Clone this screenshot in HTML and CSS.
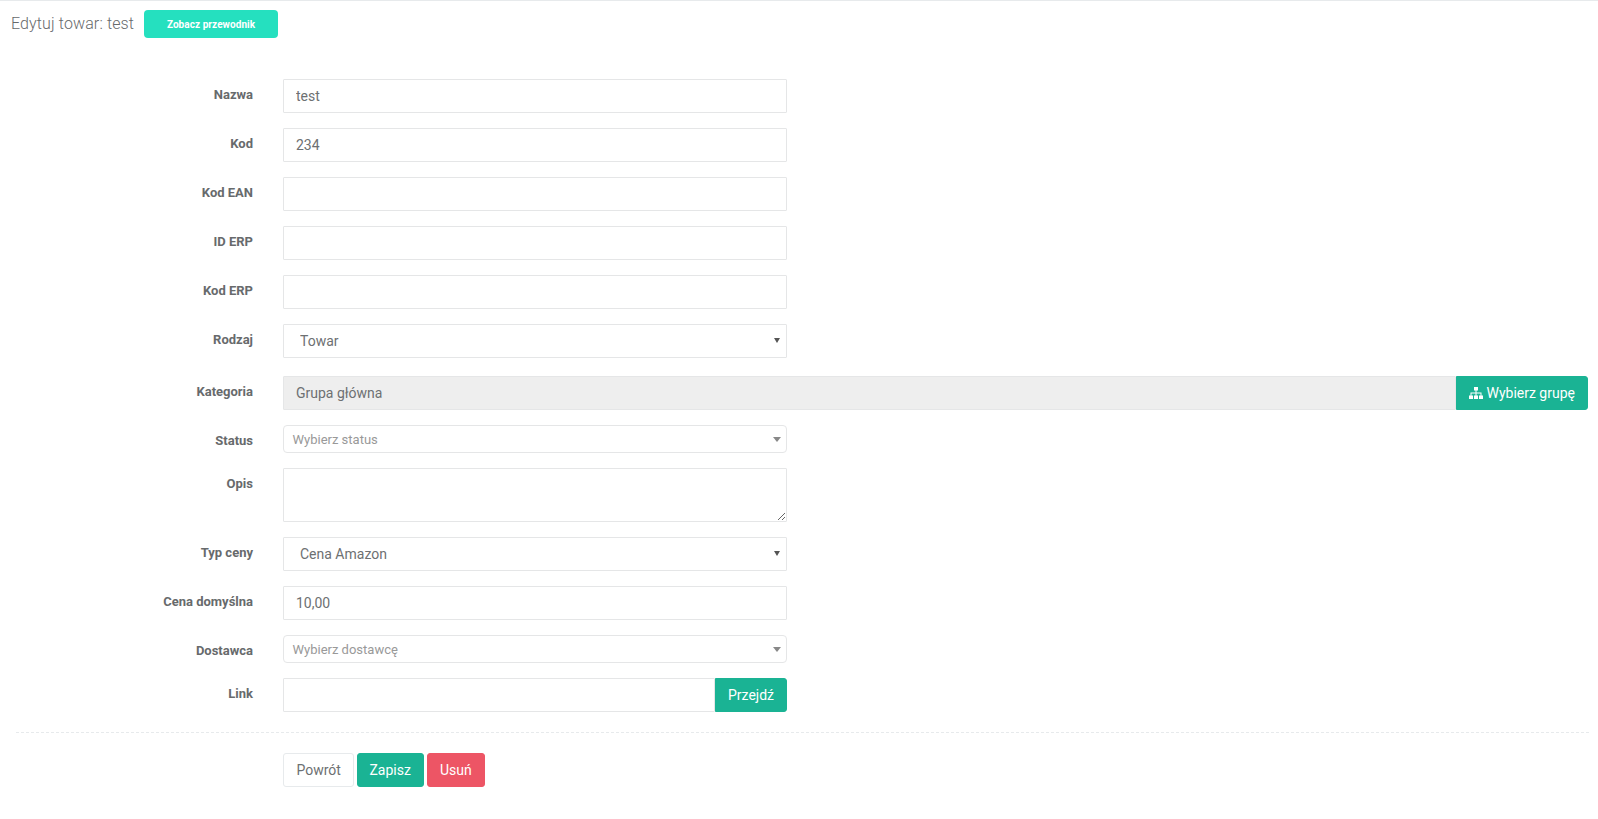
FILE: index.html
```html
<!DOCTYPE html>
<html lang="pl">
<head>
<meta charset="utf-8">
<title>Edytuj towar</title>
<link rel="stylesheet" href="styles.css">
</head>
<body>
<header class="page-head">
  <h1 class="title">Edytuj towar: test</h1>
  <a class="guide-btn">Zobacz przewodnik</a>
</header>
<form class="form">
  <div class="row"><label class="lbl">Nazwa</label><div class="field"><input class="ctl" value="test"></div></div>
  <div class="row"><label class="lbl">Kod</label><div class="field"><input class="ctl" value="234"></div></div>
  <div class="row"><label class="lbl">Kod EAN</label><div class="field"><input class="ctl"></div></div>
  <div class="row"><label class="lbl">ID ERP</label><div class="field"><input class="ctl"></div></div>
  <div class="row"><label class="lbl">Kod ERP</label><div class="field"><input class="ctl"></div></div>
  <div class="row row-tall"><label class="lbl">Rodzaj</label><div class="field select-wrap"><select class="ctl sel"><option>Towar</option></select></div></div>
  <div class="row"><label class="lbl">Kategoria</label>
    <div class="group-wide">
      <input class="ctl ctl-disabled" value="Grupa główna" disabled>
      <button type="button" class="btn btn-green btn-append btn-group-pick">
        <svg class="ico" viewBox="0 0 14 12" aria-hidden="true"><path fill="currentColor" d="M5 0h4v3.500H7.500V5.500h5V8.500H14V12H10V8.500h1.500V6.500h-4V8.500H9V12H5V8.500h1.500V6.500h-4V8.500H4V12H0V8.500h1.500V5.500h5V3.500H5z"/></svg>
        Wybierz grupę
      </button>
    </div>
  </div>
  <div class="row"><label class="lbl">Status</label><div class="field"><div class="chosen">Wybierz status<span class="caret"></span></div></div></div>
  <div class="row"><label class="lbl">Opis</label><div class="field"><textarea class="ctl area"></textarea></div></div>
  <div class="row"><label class="lbl">Typ ceny</label><div class="field select-wrap"><select class="ctl sel"><option>Cena Amazon</option></select></div></div>
  <div class="row"><label class="lbl">Cena domyślna</label><div class="field"><input class="ctl" value="10,00"></div></div>
  <div class="row"><label class="lbl">Dostawca</label><div class="field"><div class="chosen">Wybierz dostawcę<span class="caret"></span></div></div></div>
  <div class="row row-last"><label class="lbl">Link</label>
    <div class="field group">
      <input class="ctl">
      <button type="button" class="btn btn-green btn-append">Przejdź</button>
    </div>
  </div>
  <div class="divider"></div>
  <div class="actions">
    <button type="button" class="btn btn-white">Powrót</button>
    <button type="button" class="btn btn-green btn-save">Zapisz</button>
    <button type="button" class="btn btn-red">Usuń</button>
  </div>
</form>
</body>
</html>
```
FILE: styles.css
```css
* { box-sizing: border-box; }
html, body { margin: 0; padding: 0; }
body {
  font-family: Roboto, "Liberation Sans", sans-serif;
  font-size: 14px;
  color: #676a6c;
  background: #fff;
  border-top: 1px solid #e7eaec;
  height: 819px;
  overflow: hidden;
}
.page-head {
  display: flex;
  align-items: flex-start;
  height: 37px;
  padding: 9px 0 0 11px;
}
.title {
  margin: 6px 10px 0 0;
  font-size: 16px;
  font-weight: 300;
  line-height: 16px;
  letter-spacing: 0.12px;
}
.guide-btn {
  display: flex;
  align-items: center;
  justify-content: center;
  width: 134px;
  height: 28px;
  background: #25e0bf;
  color: #fff;
  border-radius: 4px;
  font-size: 10px;
  font-weight: 700;
  letter-spacing: 0.06px;
}
.form { padding: 41px 10px 0 16px; }
.row {
  display: flex;
  align-items: flex-start;
  margin-bottom: 15px;
}
.row-tall { margin-bottom: 18px; }
.row-last { margin-bottom: 20px; }
.lbl {
  flex: none;
  width: 237px;
  margin-right: 30px;
  padding-top: 7px;
  text-align: right;
  font-size: 13px;
  font-weight: 700;
  line-height: 17px;
  color: #676a6c;
}
.field { flex: none; width: 504px; }
.ctl {
  display: block;
  width: 100%;
  height: 34px;
  padding: 6px 12px;
  border: 1px solid #e5e6e7;
  border-radius: 1px;
  background: #fff;
  color: #6d7072;
  font-family: inherit;
  font-size: 14px;
  outline: none;
}
.ctl-disabled { background: #eee; opacity: 1; }
.area { height: 54px; resize: vertical; }
.select-wrap { position: relative; }
.sel { appearance: none; padding-left: 16px; }
.select-wrap::after {
  content: "";
  position: absolute;
  right: 7px;
  top: 14px;
  border-left: 3px solid transparent;
  border-right: 3px solid transparent;
  border-top: 5px solid #555;
  pointer-events: none;
}
.group, .group-wide { display: flex; }
.group-wide { flex: 1; }
.group .ctl, .group-wide .ctl { flex: 1; min-width: 0; }
.chosen {
  position: relative;
  height: 28px;
  padding-left: 8.5px;
  border: 1px solid #e5e6e7;
  border-radius: 4px;
  background: #fff;
  color: #999;
  font-size: 13px;
  line-height: 28px;
}
.caret {
  position: absolute;
  right: 5px;
  top: 11px;
  border-left: 4px solid transparent;
  border-right: 4px solid transparent;
  border-top: 5px solid #888;
}
.btn {
  height: 34px;
  padding: 0 12px;
  border: 1px solid transparent;
  border-radius: 3px;
  font-family: inherit;
  font-size: 14px;
  white-space: nowrap;
}
.btn-green { background: #1ab394; border-color: #1ab394; color: #fff; }
.btn-red { background: #ed5565; border-color: #ed5565; color: #fff; }
.btn-white { background: #fff; border-color: #e7eaec; color: #6d7072; padding: 0 12.5px; }
.btn-save { padding: 0 12px 0 11px; }
.btn-append { flex: none; border-radius: 0 3px 3px 0; }
.btn-group-pick { width: 132px; padding: 0; text-align: center; }
.ico { width: 14px; height: 12px; vertical-align: -1px; }
.divider { border-top: 1px dashed #e7eaec; margin-bottom: 20px; margin-right: -1px; }
.actions { display: flex; gap: 3px; padding-left: 267px; }
```
